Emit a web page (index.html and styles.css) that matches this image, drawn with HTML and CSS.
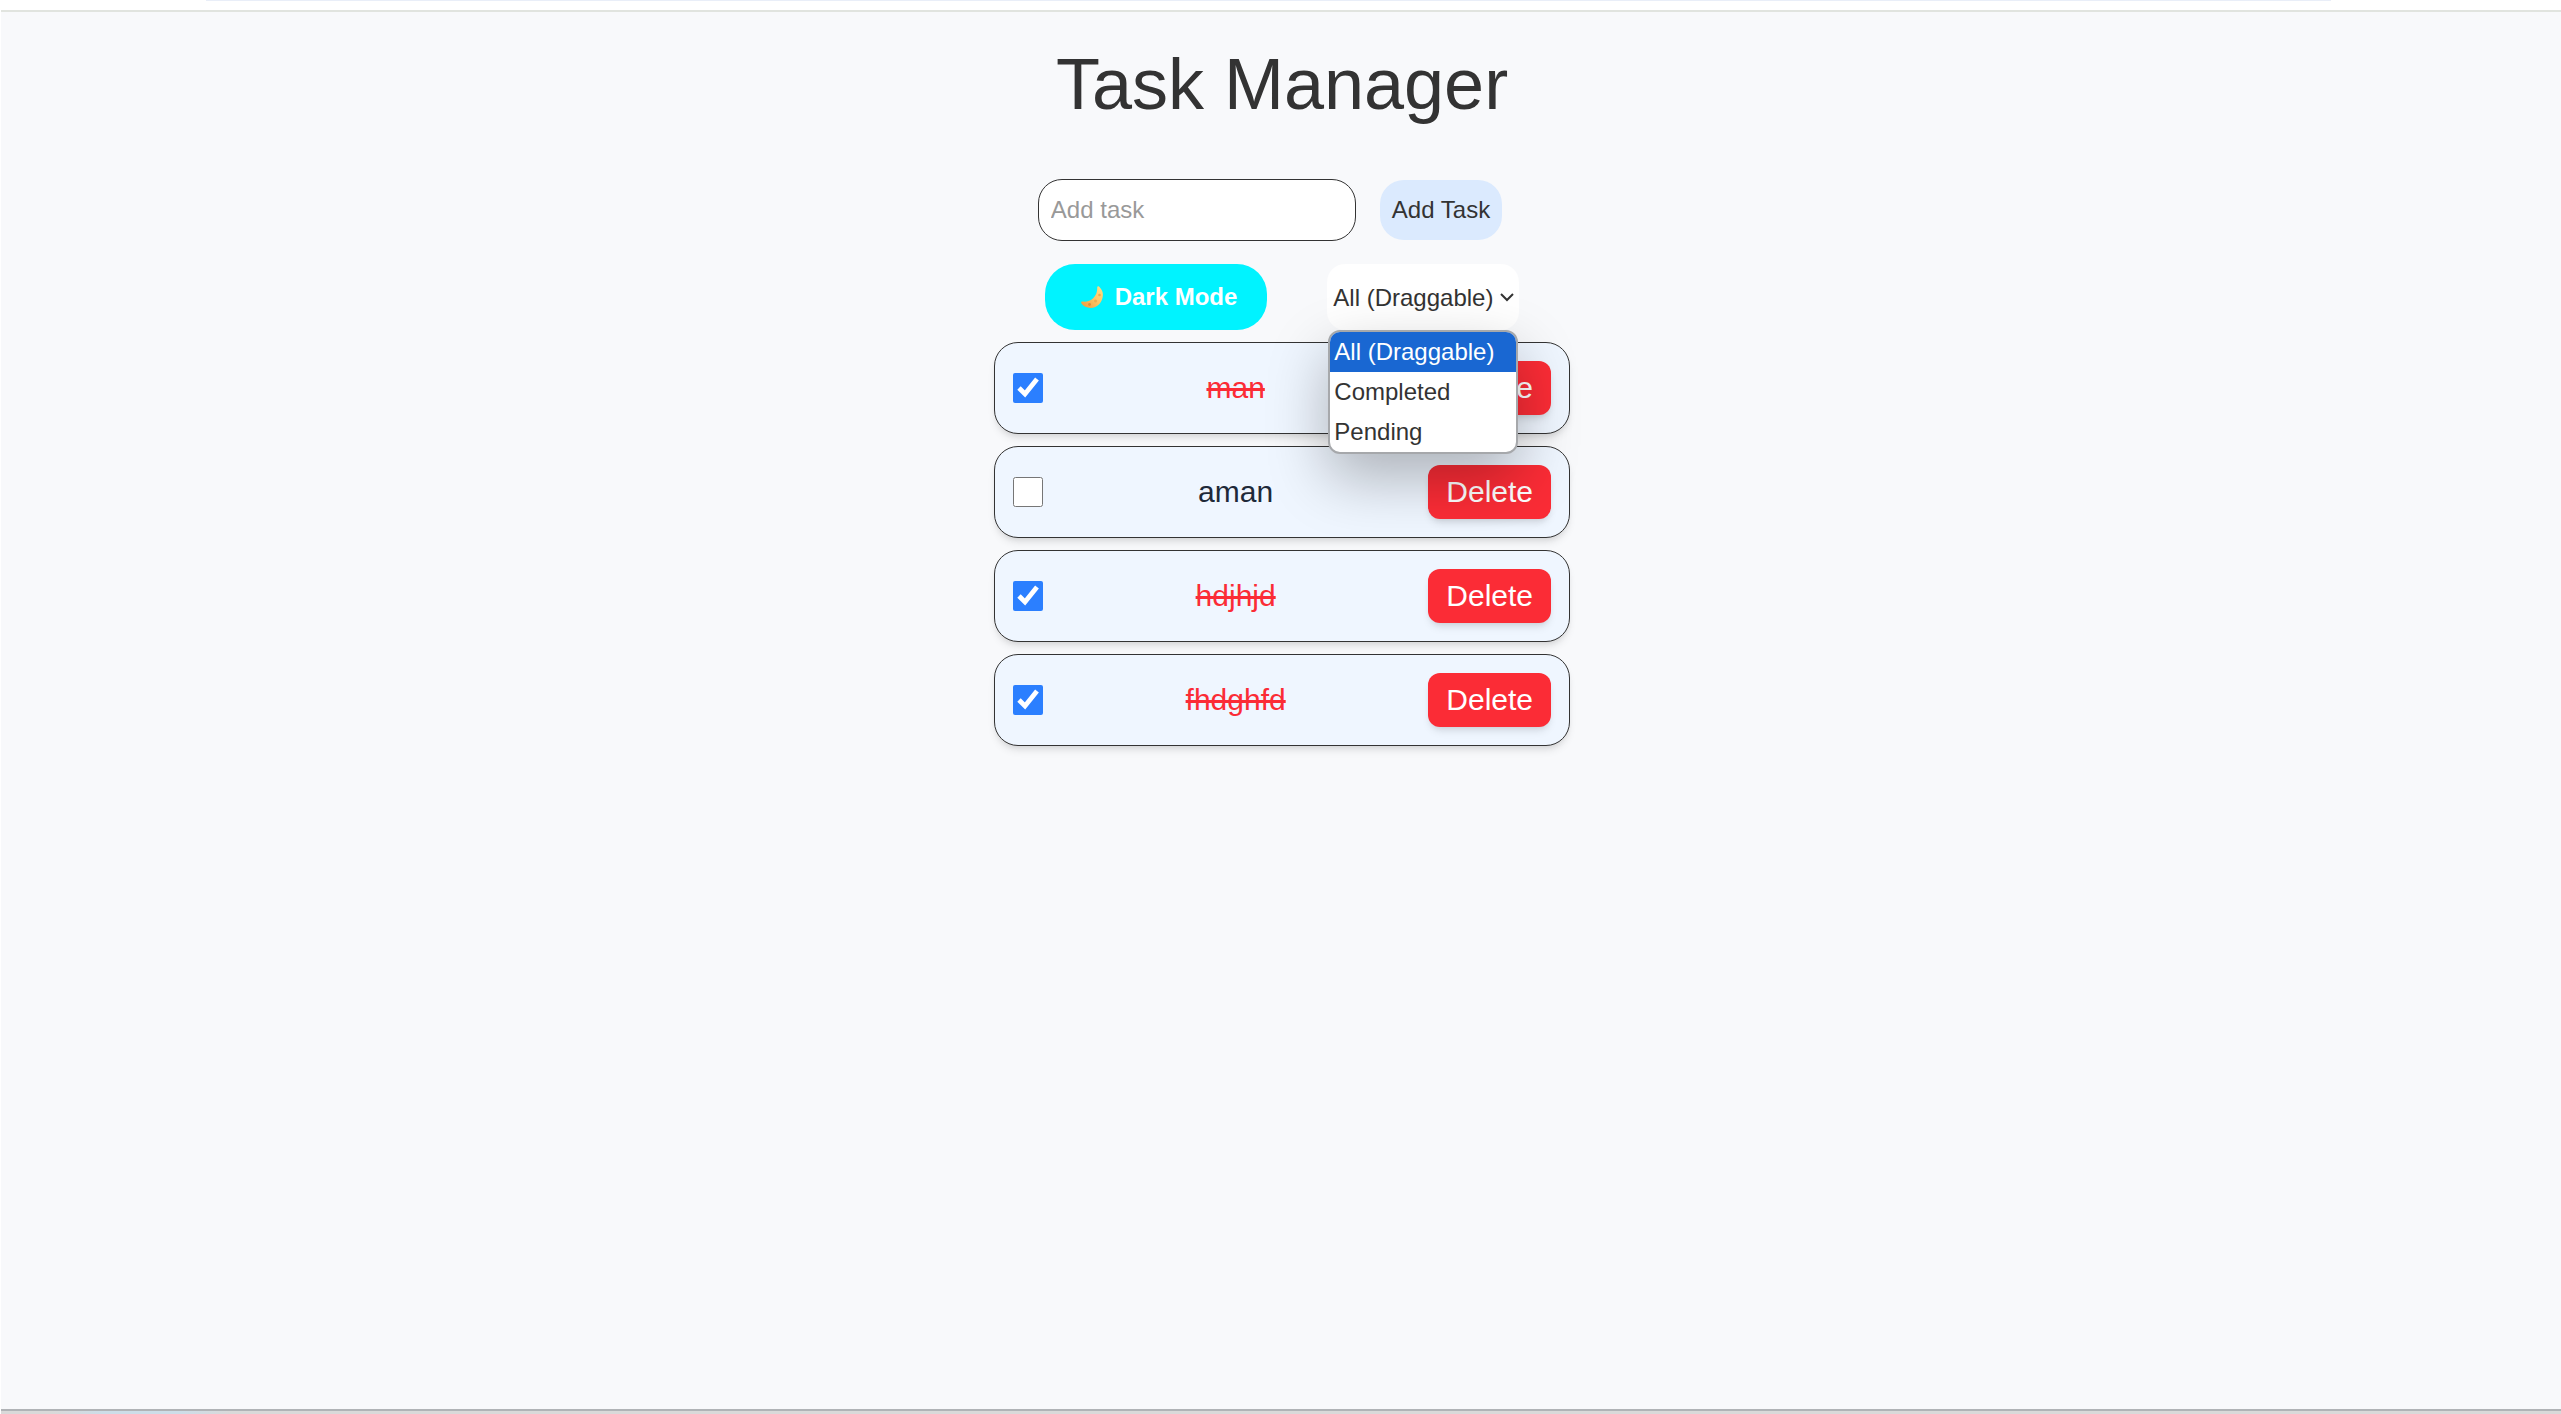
FILE: index.html
```html
<!DOCTYPE html>
<html lang="en">
<head>
<meta charset="utf-8">
<meta name="viewport" content="width=device-width, initial-scale=1">
<title>Task Manager</title>
<link rel="stylesheet" href="styles.css">
</head>
<body>
<div class="toolbar-edge"></div>
<main class="page">
  <h1 class="title">Task Manager</h1>
  <form class="add-form">
    <input class="add-input" type="text" placeholder="Add task" aria-label="Add task">
    <button class="add-button" type="submit">Add Task</button>
  </form>
  <div class="controls">
    <button class="mode-button" type="button">
      <svg class="moon" viewBox="0 0 22 22" aria-hidden="true">
        <defs>
          <linearGradient id="moon-fill" x1="1" y1="0" x2="0" y2="1">
            <stop offset="0" stop-color="#ffe08a"/>
            <stop offset="0.5" stop-color="#fdc463"/>
            <stop offset="1" stop-color="#f0963a"/>
          </linearGradient>
        </defs>
        <path fill="url(#moon-fill)" d="M16.600 0.500C17.300 0 18.200 0.600 18.900 1.400C21 3.600 22 6.200 21.900 9C21.700 16.200 16.400 21.900 9.600 21.900C5.800 21.900 2.200 20 0.300 17.200C-0.200 16.200 0.300 15.400 1.600 15.600C5.600 16.200 9.400 14.800 12.200 12.200C15.200 9.400 16.400 5.600 16.200 1.800C16.200 1.200 16.300 0.700 16.600 0.500Z"/>
        <circle cx="18.500" cy="9" r="1.300" fill="#efac4e"/>
        <circle cx="14.500" cy="15" r="1.500" fill="#efac4e"/>
        <circle cx="8.500" cy="18.500" r="1.400" fill="#df8f3c"/>
      </svg>
      Dark Mode
    </button>
    <div class="filter">
      <select class="filter-select" aria-label="Filter tasks">
        <option>All (Draggable)</option>
        <option>Completed</option>
        <option>Pending</option>
      </select>
      <ul class="filter-menu" role="listbox" aria-label="Filter options">
        <li class="filter-option filter-option-active" role="option" aria-selected="true">All (Draggable)</li>
        <li class="filter-option" role="option">Completed</li>
        <li class="filter-option" role="option">Pending</li>
      </ul>
    </div>
  </div>
  <ul class="tasks">
    <li class="task">
      <input class="task-check" type="checkbox" id="task-1" checked>
      <label class="task-name" for="task-1">man</label>
      <button class="delete-button" type="button">Delete</button>
    </li>
    <li class="task">
      <input class="task-check" type="checkbox" id="task-2">
      <label class="task-name" for="task-2">aman</label>
      <button class="delete-button" type="button">Delete</button>
    </li>
    <li class="task">
      <input class="task-check" type="checkbox" id="task-3" checked>
      <label class="task-name" for="task-3">hdjhjd</label>
      <button class="delete-button" type="button">Delete</button>
    </li>
    <li class="task">
      <input class="task-check" type="checkbox" id="task-4" checked>
      <label class="task-name" for="task-4">fhdghfd</label>
      <button class="delete-button" type="button">Delete</button>
    </li>
  </ul>
</main>
<div class="taskbar-edge"></div>
</body>
</html>
```
FILE: styles.css
```css
*,
*::before,
*::after {
  box-sizing: border-box;
}

body {
  margin: 0;
  min-height: 100vh;
  display: flex;
  flex-direction: column;
  padding-left: 1px;
  background: #fff;
  color: #333;
  font-family: Arial, "Liberation Sans", sans-serif;
  font-size: 24px;
}

button,
input,
select {
  font: inherit;
  color: inherit;
}

.toolbar-edge {
  height: 12px;
  border-bottom: 2px solid #e1e4df;
  background: linear-gradient(90deg, transparent 8%, #e9eef8 8%, #e9eef8 91%, transparent 91%) top / 100% 1px no-repeat;
}

.page {
  flex: 1;
  display: flex;
  flex-direction: column;
  align-items: center;
  padding: 36px 0 0 2px;
  background: #f8f9fb;
}

.title {
  margin: 0 0 59px;
  font-size: 72px;
  font-weight: 400;
  line-height: 72px;
}

.add-form {
  display: flex;
  align-items: center;
  gap: 24px;
  padding-right: 24px;
}

.add-input {
  width: 318px;
  height: 62px;
  padding: 0 12px;
  border: 1px solid #333;
  border-radius: 24px;
  background: #fff;
}

.add-input::placeholder {
  color: #999;
  opacity: 1;
}

.add-button {
  height: 60px;
  padding: 0 12px;
  border: 0;
  border-radius: 24px;
  background: #dbeafe;
}

.controls {
  display: flex;
  gap: 60px;
  margin-top: 23px;
}

.mode-button {
  display: flex;
  align-items: center;
  gap: 12px;
  height: 66px;
  padding: 0 30px 0 36px;
  border: 0;
  border-radius: 30px;
  background: #00f3ff;
  color: #fff;
  font-weight: 700;
}

.moon {
  width: 22px;
  height: 22px;
}

.filter {
  position: relative;
}

.filter-select {
  appearance: none;
  display: block;
  height: 66px;
  padding: 0 25px 0 6px;
  border: 0;
  border-radius: 18px;
  background: #fff url("data:image/svg+xml,%3Csvg xmlns='http://www.w3.org/2000/svg' width='14' height='10' fill='none' stroke='%23333' stroke-width='2'%3E%3Cpath d='M1 2l6 6 6-6'/%3E%3C/svg%3E") right 5px center no-repeat;
}

.filter-menu {
  position: absolute;
  z-index: 1;
  top: 100%;
  left: 0;
  right: 0;
  margin: 0 1px;
  padding: 0;
  overflow: hidden;
  list-style: none;
  border: 2px solid #a6a8ab;
  border-radius: 12px;
  background: #fff;
  box-shadow: 0 24px 60px rgba(0, 0, 0, 0.28);
}

.filter-option {
  padding: 0 4px;
  line-height: 40px;
}

.filter-option-active {
  background: #1967d2;
  color: #fff;
}

.tasks {
  display: flex;
  flex-direction: column;
  gap: 12px;
  width: 576px;
  max-width: 100%;
  margin: 12px 0;
  padding: 0;
  list-style: none;
  font-size: 30px;
}

.task {
  display: flex;
  align-items: center;
  padding: 18px;
  border: 1px solid #333;
  border-radius: 24px;
  background: #eff6ff;
  box-shadow: 0 6px 9px -2px rgba(0, 0, 0, 0.1), 0 3px 6px -3px rgba(0, 0, 0, 0.1);
}

.task-check {
  width: 30px;
  height: 30px;
  margin: 0;
  accent-color: #2b7fff;
}

.task-name {
  flex: 1;
  text-align: center;
  color: #1e2939;
}

.task-check:checked + .task-name {
  color: #fb2c36;
  text-decoration: line-through;
}

.delete-button {
  height: 54px;
  padding: 0 18px;
  border: 0;
  border-radius: 12px;
  background: #fb2c36;
  color: #fff;
  box-shadow: 0 6px 9px -2px rgba(0, 0, 0, 0.1), 0 3px 6px -3px rgba(0, 0, 0, 0.1);
}

.taskbar-edge {
  height: 5px;
  border-top: 2px solid #b0b3b6;
  background: linear-gradient(90deg, #d9d9d9 2%, #cddde8 4%, #cddde8 7%, #d9d9d9 9%);
}
```
